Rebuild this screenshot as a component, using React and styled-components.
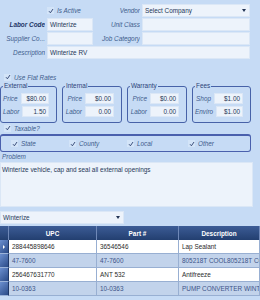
import React from "react";
import styled, { createGlobalStyle } from "styled-components";

const Global = createGlobalStyle`
  html, body { margin: 0; padding: 0; background: #c6dbf5; }
  * { box-sizing: border-box; }
`;

const Page = styled.div`
  width: 260px;
  height: 300px;
  overflow: hidden;
  background: #c6dbf5;
  font-family: "Liberation Sans", Arial, sans-serif;
  font-size: 6.4px;
  color: #2a3d66;
  display: flex;
  flex-direction: column;
`;

const FormGrid = styled.div`
  display: grid;
  grid-template-columns: 45px 46px 45px 108px;
  grid-auto-rows: 13px;
  column-gap: 2px;
  row-gap: 1px;
  padding-top: 4px;
`;

const Label = styled.div`
  display: flex;
  align-items: center;
  justify-content: flex-end;
  font-style: italic;
  font-weight: ${(p) => (p.$bold ? 700 : 400)};
  color: ${(p) => (p.$bold ? "#1d3566" : "#3e5b8c")};
  white-space: nowrap;
  overflow: hidden;
`;

const Input = styled.div`
  background: #edf3fb;
  border: 1px solid #dbe7f6;
  display: flex;
  align-items: center;
  justify-content: ${(p) => (p.$right ? "flex-end" : "flex-start")};
  padding: 0 2px;
  color: #253858;
  white-space: nowrap;
  overflow: hidden;
  grid-column: ${(p) => p.$span || "auto"};
`;

const SelectBox = styled(Input)`
  justify-content: space-between;
  padding-right: 3px;
  width: ${(p) => p.$w || "auto"};
  height: ${(p) => p.$h || "auto"};
`;

const Arrow = styled.span`
  width: 0;
  height: 0;
  border-left: 2.5px solid transparent;
  border-right: 2.5px solid transparent;
  border-top: 3px solid #223354;
`;

const CheckRow = styled.div`
  display: flex;
  align-items: center;
  gap: 3px;
  height: ${(p) => p.$h || "10px"};
  padding-left: ${(p) => p.$pl || "0px"};
  margin-top: ${(p) => p.$mt || "0px"};
  font-style: italic;
  color: #3e5b8c;
  white-space: nowrap;
`;

const Box = styled.span`
  width: 7px;
  height: 7px;
  background: #d3e4f8;
  display: inline-flex;
  align-items: center;
  justify-content: center;
`;

const Check = ({ label, ...rest }) => (
  <CheckRow {...rest}>
    <Box>
      <svg width="6" height="6" viewBox="0 0 6 6">
        <path d="M1 3.2 L2.4 4.8 L5 1" fill="none" stroke="#2b3f6e" strokeWidth="0.9" />
      </svg>
    </Box>
    {label}
  </CheckRow>
);

const Groups = styled.div`
  display: flex;
  justify-content: space-between;
  width: 251px;
`;

const Fieldset = styled.fieldset`
  margin: 0;
  width: ${(p) => p.$w};
  min-width: 0;
  padding: 3px 7px 5px 2px;
  border: 1px solid #4762a8;
  border-radius: 3px;
  display: flex;
  flex-direction: column;
  gap: 2px;
`;

const Legend = styled.legend`
  padding: 0 1px;
  margin-left: 0;
  line-height: 8px;
  font-size: 6.4px;
  color: #2c4478;
`;

const PairRow = styled.div`
  display: flex;
  align-items: center;
  justify-content: flex-end;
  gap: 3px;
  height: 11px;
`;

const PairLabel = styled.span`
  font-style: italic;
  color: #3e5b8c;
`;

const SmallInput = styled(Input)`
  width: 29px;
  height: 11px;
`;

const TaxBox = styled.div`
  width: 251px;
  height: 18px;
  border: 1px solid #4a60ad;
  border-top-width: 2px;
  border-radius: 3px;
  display: grid;
  grid-template-columns: 58px 58px 61px 60px;
  align-items: center;
  padding-left: 10px;
  margin-top: 1px;
`;

const ProblemLabel = styled.div`
  height: 8px;
  line-height: 8px;
  padding-left: 2px;
  margin-top: 1px;
  font-style: italic;
  color: #3e5b8c;
`;

const TextArea = styled.div`
  width: 253px;
  height: 45px;
  margin-top: 1px;
  background: #edf3fb;
  border: 1px solid #dbe7f6;
  padding: 3px 1px;
  color: #253858;
`;

const Dropdown = styled(SelectBox)`
  margin-top: 4px;
  flex: none;
`;

const Table = styled.div`
  margin-top: 2px;
  display: grid;
  grid-template-columns: 9px 88px 82px 81px;
  grid-auto-rows: 14px;
`;

const HeadCell = styled.div`
  background: linear-gradient(#3c5c96, #233f70);
  color: #ffffff;
  font-weight: 700;
  display: flex;
  align-items: center;
  justify-content: center;
  border-right: 1px solid #6f88b8;
  border-bottom: 1px solid #1b2f57;
  height: 15px;
`;

const RowHead = styled.div`
  background: linear-gradient(135deg, #6b8fcf, #2b4b88);
  border-bottom: 1px solid #9ab2d8;
  border-right: 1px solid #1f3868;
  display: flex;
  align-items: center;
  justify-content: center;
`;

const Tri = styled.span`
  width: 0;
  height: 0;
  border-top: 2px solid transparent;
  border-bottom: 2px solid transparent;
  border-left: 2.5px solid #ffffff;
`;

const Cell = styled.div`
  background: ${(p) => (p.$alt ? "#c2d3eb" : "#ffffff")};
  color: ${(p) => (p.$alt ? "#3d5489" : "#2b2b2b")};
  border-right: 1px solid #98afd2;
  border-bottom: 1px solid #98afd2;
  display: flex;
  align-items: center;
  padding-left: 3px;
  white-space: nowrap;
  overflow: hidden;
`;

const groups = [
  { t: "External", w: "57px", rows: [["Price", "$80.00"], ["Labor", "1.50"]] },
  { t: "Internal", w: "60px", rows: [["Price", "$0.00"], ["Labor", "0.00"]] },
  { t: "Warranty", w: "60px", rows: [["Price", "$0.00"], ["Labor", "0.00"]] },
  { t: "Fees", w: "59px", rows: [["Shop", "$1.00"], ["Enviro", "$1.00"]] },
];

const rows = [
  ["288445898646", "36546546", "Lap Sealant"],
  ["47-7600", "47-7600", "805218T COOL805218T COOL"],
  ["256467631770", "ANT 532", "Antifreeze"],
  ["10-0363", "10-0363", "PUMP CONVERTER WINTERIZE"],
];

export default function App() {
  return (
    <Page>
      <Global />
      <FormGrid>
        <div />
        <Check label="Is Active" $h="13px" />
        <Label>Vendor</Label>
        <SelectBox>
          Select Company
          <Arrow />
        </SelectBox>

        <Label $bold>Labor Code</Label>
        <Input>Winterize</Input>
        <Label>Unit Class</Label>
        <Input />

        <Label>Supplier Co...</Label>
        <Input />
        <Label>Job Category</Label>
        <Input />

        <Label>Description</Label>
        <Input $span="2 / 5">Winterize RV</Input>
      </FormGrid>

      <Check label="Use Flat Rates" $pl="4px" $mt="13px" />

      <Groups>
        {groups.map((g) => (
          <Fieldset key={g.t} $w={g.w}>
            <Legend>{g.t}</Legend>
            {g.rows.map(([l, v]) => (
              <PairRow key={l}>
                <PairLabel>{l}</PairLabel>
                <SmallInput $right>{v}</SmallInput>
              </PairRow>
            ))}
          </Fieldset>
        ))}
      </Groups>

      <Check label="Taxable?" $pl="4px" />

      <TaxBox>
        <Check label="State" />
        <Check label="County" />
        <Check label="Local" />
        <Check label="Other" />
      </TaxBox>

      <ProblemLabel>Problem</ProblemLabel>
      <TextArea>Winterize vehicle, cap and seal all external openings</TextArea>

      <Dropdown $w="124px" $h="13px">
        Winterize
        <Arrow />
      </Dropdown>

      <Table>
        <HeadCell />
        <HeadCell>UPC</HeadCell>
        <HeadCell>Part #</HeadCell>
        <HeadCell>Description</HeadCell>
        {rows.map((r, i) => (
          <React.Fragment key={i}>
            <RowHead>{i === 0 && <Tri />}</RowHead>
            {r.map((c, j) => (
              <Cell key={j} $alt={i % 2 === 1}>
                {c}
              </Cell>
            ))}
          </React.Fragment>
        ))}
      </Table>
    </Page>
  );
}
